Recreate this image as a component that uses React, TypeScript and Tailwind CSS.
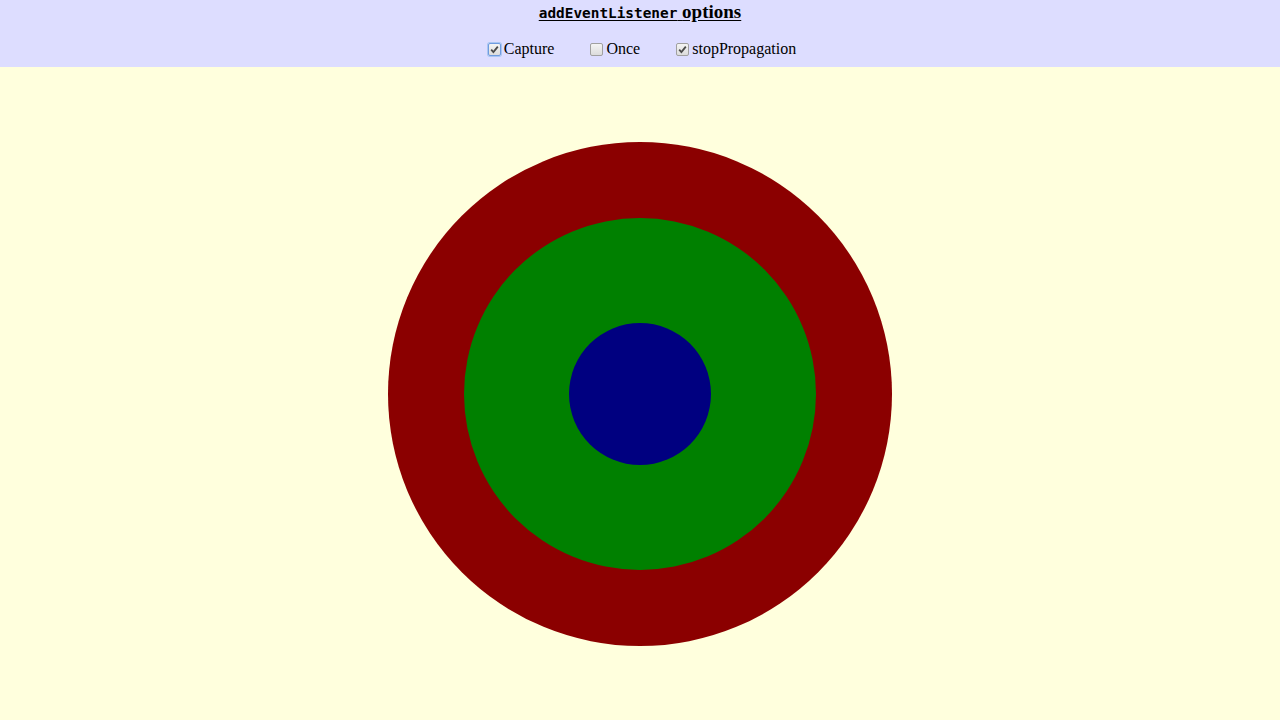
import { useState } from "react";

type Opt = { key: string; label: string };

const opts: Opt[] = [
  { key: "capture", label: "Capture" },
  { key: "once", label: "Once" },
  { key: "stop", label: "stopPropagation" },
];

function Box({ checked, focused }: { checked: boolean; focused?: boolean }) {
  return (
    <span
      className={
        "inline-flex items-center justify-center w-[13px] h-[13px] rounded-[2px] border bg-gradient-to-b from-[#f4f4f4] to-[#dcdcdc] ml-[4px] mr-[3px] " +
        (focused ? "border-[#6f9be0] ring-1 ring-[#a9c6f2]" : "border-[#a0a0a0]")
      }
    >
      {checked && (
        <svg width="9" height="9" viewBox="0 0 9 9">
          <path d="M1.2 4.6 L3.4 7 L7.8 1.6" fill="none" stroke="#4a4a4a" strokeWidth="1.8" />
        </svg>
      )}
    </span>
  );
}

export default function App() {
  const [state, setState] = useState<Record<string, boolean>>({
    capture: true,
    once: false,
    stop: true,
  });

  return (
    <div className="flex flex-col h-screen bg-[#ffffdd] font-['Liberation_Serif',serif] text-black">
      <div className="bg-[#ddddff] h-[67px] shrink-0 flex flex-col items-center">
        <div className="mt-[1px] text-[19px] leading-[22px] font-bold underline underline-offset-[2px]">
          <code className="font-['DejaVu_Sans_Mono',monospace] text-[14.4px]">addEventListener</code>{" "}
          options
        </div>
        <div className="mt-[15px] flex items-center gap-[32px] text-[16px] leading-[20px]">
          {opts.map((o) => (
            <label
              key={o.key}
              className="flex items-center cursor-pointer"
              onClick={() => setState((s) => ({ ...s, [o.key]: !s[o.key] }))}
            >
              <Box checked={state[o.key]} focused={o.key === "capture"} />
              {o.label}
            </label>
          ))}
        </div>
      </div>
      <div className="flex-1 flex items-center justify-center">
        <div className="w-[504px] h-[504px] rounded-full bg-[#8b0000] flex items-center justify-center">
          <div className="w-[352px] h-[352px] rounded-full bg-[#008000] flex items-center justify-center">
            <div className="w-[142px] h-[142px] rounded-full bg-[#000080]" />
          </div>
        </div>
      </div>
    </div>
  );
}
